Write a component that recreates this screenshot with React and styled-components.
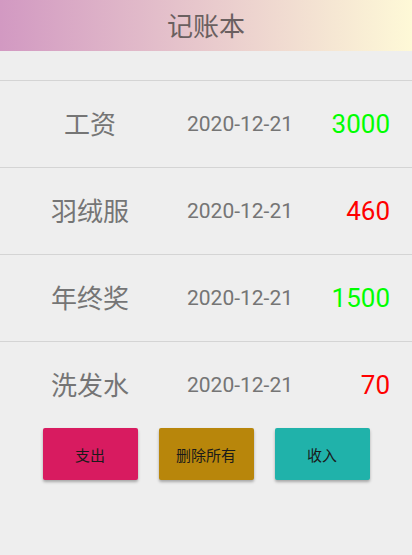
import React from 'react'
import styled, { createGlobalStyle } from 'styled-components'

const GlobalStyle = createGlobalStyle`
  html, body {
    margin: 0;
    padding: 0;
    background: #eeeeee;
    font-family: Roboto, "Noto Sans CJK SC", sans-serif;
  }
`

const records = [
  { name: '工资', date: '2020-12-21', amount: 3000, income: true },
  { name: '羽绒服', date: '2020-12-21', amount: 460, income: false },
  { name: '年终奖', date: '2020-12-21', amount: 1500, income: true },
  { name: '洗发水', date: '2020-12-21', amount: 70, income: false },
]

const App = () => {
  return (
    <Page>
      <GlobalStyle />
      <Header>记账本</Header>
      <List>
        {records.map((r, key) => (
          <Row key={key}>
            <Name>{r.name}</Name>
            <DateText>{r.date}</DateText>
            <Amount income={r.income}>{r.amount}</Amount>
          </Row>
        ))}
      </List>
      <Buttons>
        <Button bg='#d81b60'>支出</Button>
        <Button bg='#b8860b'>删除所有</Button>
        <Button bg='#20b2aa'>收入</Button>
      </Buttons>
    </Page>
  )
}

const Page = styled.div`
  width: 412px;
  height: 555px;
  background: #eeeeee;
  display: flex;
  flex-direction: column;
`

const Header = styled.div`
  height: 51px;
  padding-bottom: 2px;
  box-sizing: border-box;
  display: flex;
  align-items: center;
  justify-content: center;
  background: linear-gradient(to right, #d299c2, #fef9d7);
  color: #6a6060;
  font-size: 26px;
  font-family: "Noto Sans CJK SC", sans-serif;
`

const List = styled.div`
  margin-top: 29px;
  display: flex;
  flex-direction: column;
`

const Row = styled.div`
  height: 86px;
  border-top: 1px solid #d4d4d4;
  display: grid;
  grid-template-columns: 180px 120px 1fr;
  align-items: center;
`

const Name = styled.div`
  text-align: center;
  font-size: 26px;
  padding-bottom: 4px;
  color: #757575;
  font-family: "Noto Sans CJK SC", sans-serif;
`

const DateText = styled.div`
  text-align: center;
  font-size: 21px;
  color: #757575;
  font-family: Roboto, sans-serif;
`

const Amount = styled.div.withConfig({ shouldForwardProp: p => p !== 'income' })`
  text-align: right;
  padding-right: 22px;
  font-size: 26px;
  font-family: Roboto, sans-serif;
  color: ${p => (p.income ? '#00ff00' : '#ff0000')};
`

const Buttons = styled.div`
  display: flex;
  justify-content: center;
  gap: 21px;
`

const Button = styled.button.withConfig({ shouldForwardProp: p => p !== 'bg' })`
  width: 95px;
  height: 52px;
  border: none;
  border-radius: 2px;
  background: ${p => p.bg};
  color: #1a1a1a;
  font-size: 15px;
  font-family: "Noto Sans CJK SC", sans-serif;
  box-shadow: 0 2px 3px rgba(0, 0, 0, 0.3);
  padding: 0;
`

export default App
